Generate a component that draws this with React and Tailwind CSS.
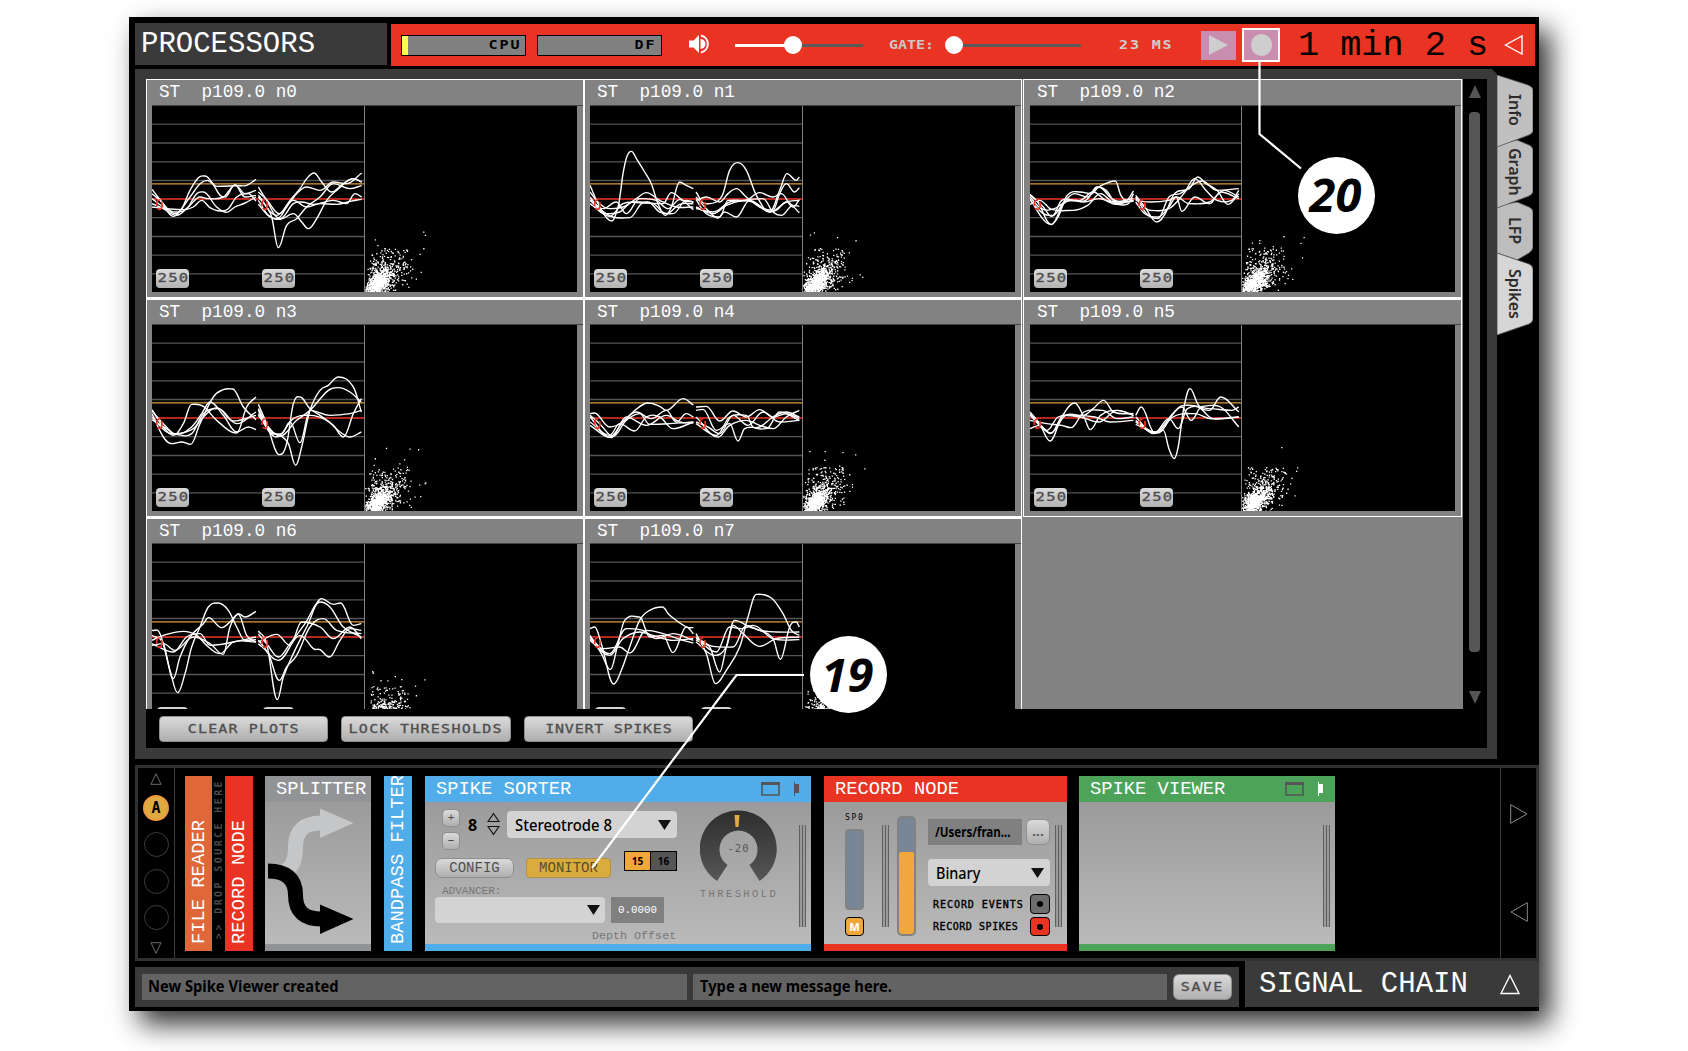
import React from 'react';

const MONO = "font-['Liberation_Mono',monospace]";
const PIXEL = "font-['DejaVu_Sans_Mono',monospace]";
const SANS = "font-['Noto_Sans','Open_Sans',sans-serif]";

// Spike traces. Each cell holds curves for two channels, in the coordinate frame given by `frame`.
const CELLS = [
  {
    name: 'n0', frame: '96 317 636 558',
    curves: `96,567 120,598 160,648 185,625 210,570 235,532 255,527 275,545 300,585 315,590 345,553 375,580 408,570
96,580 120,600 165,640 210,590 240,550 262,540 290,558 350,556 380,555 408,537
96,595 130,620 165,635 200,625 230,580 250,575 290,620 320,636 345,620 375,608 408,590
96,610 130,625 170,645 205,620 240,590 265,595 310,590 345,555 375,590 408,585
96,620 140,625 190,628 220,620 245,600 270,622 300,632 325,625 350,590 385,580 408,602
415,560 440,600 475,652 500,620 530,580 560,560 600,570 640,545 680,550 725,518
415,575 440,598 478,640 510,600 540,565 560,535 582,518 605,545 635,575 670,550 700,535 725,545
415,590 440,620 455,650 475,742 500,675 530,655 560,620 600,590 640,550 690,565 725,556
415,600 445,645 480,657 520,640 545,665 565,685 590,655 620,600 650,570 700,535 725,545
415,612 450,650 480,655 520,610 545,605 580,612 640,600 680,610 705,580 725,590
415,585 470,645 520,600 560,620 600,610 650,612 690,603 725,597`,
  },
  {
    name: 'n1', frame: '31 317 636 558',
    curves: `31,555 60,620 97,662 115,620 122,580 130,520 142,468 155,453 172,478 195,515 215,550 235,610 257,645 275,620 300,545 320,555 341,565
31,575 60,610 90,625 130,620 170,595 200,577 240,600 290,620 341,620
31,590 60,625 100,650 150,652 185,610 205,605 240,635 280,640 320,600 341,605
31,598 70,625 110,605 140,640 180,595 230,600 265,625 300,598 341,628
31,600 80,640 120,635 160,605 220,610 260,640 300,612 341,610
31,610 90,648 130,610 190,608 250,610 275,577 310,600 341,605
349,575 375,610 410,605 430,580 450,510 475,487 500,510 530,585 570,635 600,570 622,520 650,540 659,530
349,600 380,590 420,605 445,580 470,565 500,590 540,620 580,630 600,580 620,550 645,575 659,562
349,590 380,625 415,653 435,635 470,650 510,600 560,630 590,630 620,605 659,637
349,625 400,635 450,605 500,600 540,577 580,590 605,580 640,620 659,598
349,598 380,640 420,650 445,600 520,605 570,635 620,605 659,600
349,620 400,640 440,615 490,600 550,595 580,635 605,645 640,615 659,618`,
  },
  {
    name: 'n2', frame: '54 317 571 558',
    curves: `54,585 75,605 111,672 130,650 155,585 190,575 220,580 240,560 285,542 300,585 315,600 334,572
54,582 90,620 112,648 150,600 175,580 210,590 235,560 260,570 290,610 334,600
54,590 85,625 120,625 160,600 200,605 240,595 290,612 320,610 334,580
54,600 90,640 115,645 140,600 190,600 225,575 260,600 300,605 334,600
54,612 80,600 112,627 170,630 210,615 245,580 280,605 334,595
54,595 88,655 112,673 145,610 175,600 205,600 240,560 275,595 300,605 334,603
340,585 365,620 397,665 420,640 445,580 485,565 508,530 530,550 560,570 590,612 619,580
340,590 370,640 400,655 430,590 460,580 520,542 560,570 619,565
340,600 380,605 430,600 450,590 485,610 540,605 580,570 619,590
340,605 365,640 400,650 430,620 450,590 465,633 500,590 540,610 570,575 619,595
340,595 380,630 430,625 470,580 500,535 530,570 560,600 600,600 619,570`,
  },
  {
    name: 'n3', frame: '96 74 636 558',
    curves: `96,328 130,380 160,405 190,370 215,312 250,318 290,360 350,398 380,320 408,290
96,340 130,410 155,430 185,425 212,432 240,370 280,290 310,268 338,266 370,320 408,358
96,332 130,370 170,402 215,380 245,340 270,305 310,345 350,395 385,380 408,388
96,350 140,395 170,400 220,385 250,350 290,322 340,362 408,345
96,358 140,385 165,402 215,400 250,340 295,325 350,370 408,335
415,312 440,370 478,463 500,430 520,310 540,290 570,325 600,345 640,375 670,410 700,340 724,295
415,325 450,390 480,405 505,430 527,495 545,440 570,330 600,270 625,255 655,230 700,260 724,335
415,340 445,380 480,408 530,360 570,330 625,270 655,262 690,275 724,305
415,330 450,395 485,400 510,365 540,427 570,330 630,345 690,340 724,330
415,345 470,410 520,355 570,345 620,360 660,395 690,410 724,395`,
  },
  {
    name: 'n4', frame: '91 74 636 558',
    curves: `91,340 110,340 150,380 190,365 220,335 265,308 300,318 320,330 370,295 401,314
91,350 150,410 190,365 230,335 275,355 320,330 350,365 380,340 401,350
91,365 150,405 180,370 225,392 260,350 300,350 340,385 401,365
91,375 155,412 200,350 260,375 320,345 360,365 401,368
91,345 120,370 160,408 200,360 240,340 270,372 330,370 401,365
409,320 440,318 480,362 520,332 560,350 600,328 640,350 680,340 719,355
409,330 430,327 470,390 510,370 535,422 555,385 600,380 640,350 680,335 719,350
409,350 475,410 510,375 560,360 600,375 640,385 680,350 719,330
409,365 445,380 480,400 520,345 565,375 610,335 660,365 719,360
409,370 470,405 510,350 560,345 580,380 620,385 660,335 719,360`,
  },
  {
    name: 'n5', frame: '54 74 571 558',
    curves: `54,335 80,370 108,422 140,350 175,308 200,350 217,388 245,345 290,330 334,345
54,345 90,385 110,398 150,345 200,345 225,325 253,300 280,335 334,340
54,360 100,370 140,375 165,382 200,335 250,330 290,355 334,350
54,385 80,375 110,400 145,345 190,350 240,365 290,330 334,345
54,340 100,390 130,350 180,345 230,350 270,365 334,360
340,345 355,320 390,395 415,390 430,445 444,475 455,440 470,325 487,265 510,315 540,330 570,290 619,335
340,360 390,398 430,355 455,385 480,325 540,325 600,330 619,320
340,372 395,395 440,340 465,320 490,360 520,318 570,320 619,380
340,350 390,400 420,370 470,315 510,320 550,355 619,350
340,365 400,398 440,350 500,340 540,355 580,355 619,350`,
  },
  {
    name: 'n6', frame: '96 101 636 558',
    curves: `96,360 120,370 150,480 173,547 195,490 215,410 240,350 265,290 295,278 325,300 350,350 375,390 408,388
96,375 130,400 160,505 180,440 210,380 250,340 265,322 305,352 335,330 355,310 375,320 408,303
96,390 130,375 190,363 230,375 265,410 300,430 340,395 408,395
96,400 160,425 200,380 240,370 270,405 340,395 408,380
96,405 130,400 165,420 220,380 270,400 310,432 330,350 355,312 380,375 408,395
415,362 440,400 472,568 490,500 520,430 560,350 605,265 640,282 662,278 700,345 724,340
415,372 440,400 475,440 510,400 555,340 600,275 630,290 670,350 724,380
415,395 470,372 510,405 545,335 600,350 640,385 690,350 724,385
415,400 445,430 478,510 500,470 530,435 570,350 610,325 650,360 724,370
415,390 475,450 530,380 550,380 580,415 600,418 628,440 660,390 690,355 724,360`,
  },
  {
    name: 'n7', frame: '91 101 636 558',
    curves: `91,355 105,350 125,400 162,521 185,480 210,410 240,330 270,300 308,290 330,315 380,350 401,352
91,375 125,430 152,478 175,400 195,330 240,320 270,380 310,375 340,427 380,350 401,370
91,380 150,430 200,355 250,360 290,385 340,370 401,390
91,390 150,435 190,385 240,365 280,375 340,390 401,385
91,385 130,415 180,410 210,428 260,360 310,370 370,390 401,398
409,370 440,430 468,520 500,480 540,410 565,320 590,252 635,263 670,310 695,360 719,375
409,385 450,410 480,485 500,410 525,330 570,350 600,360 640,385 662,447 690,350 710,335 719,350
409,395 465,435 500,410 520,345 550,370 600,408 650,385 719,380
409,380 470,425 510,350 545,355 580,345 640,385 719,388
409,390 460,408 520,410 560,345 600,360 650,365 719,365`,
  },
];

// Catmull-Rom spline through the listed points.
function smooth(line) {
  const p = line.trim().split(' ').map((s) => s.split(',').map(Number));
  let d = `M${p[0][0]} ${p[0][1]}`;
  for (let i = 0; i < p.length - 1; i++) {
    const a = p[i - 1] || p[i];
    const b = p[i];
    const c = p[i + 1];
    const e = p[i + 2] || c;
    const cx1 = b[0] + (c[0] - b[0]) * 0.38;
    const cx2 = c[0] - (c[0] - b[0]) * 0.38;
    // A local extremum gets a flat tangent so that the curve peaks at the listed point.
    const m1 = (b[1] - a[1]) * (c[1] - b[1]) < 0 ? 0 : (c[1] - a[1]) / (c[0] - a[0] || 1);
    const m2 = (c[1] - b[1]) * (e[1] - c[1]) < 0 ? 0 : (e[1] - b[1]) / (e[0] - b[0] || 1);
    d += `C${cx1.toFixed(1)} ${(b[1] + m1 * (cx1 - b[0])).toFixed(1)} ${cx2.toFixed(1)} ${(c[1] - m2 * (c[0] - cx2)).toFixed(1)} ${c[0]} ${c[1]}`;
  }
  return d;
}

function scatter(seed) {
  let s = seed * 7919 + 13;
  const r = () => {
    s = (s * 16807) % 2147483647;
    return s / 2147483647;
  };
  for (let i = 0; i < 8; i++) r();
  const g = () => Math.sqrt(-2 * Math.log(r() + 1e-9)) * Math.cos(6.2832 * r());
  let d = '';
  const put = (x, y) => {
    if (x > 0 && y > 0) d += `M${x.toFixed(1)} ${(186 - y).toFixed(1)}h1.3v1.3h-1.3z`;
  };
  for (let i = 0; i < 620; i++) {
    const t = g() * 5;
    put(12 + t + g() * 4, 9 + t + g() * 4.5);
  }
  for (let i = 0; i < 330; i++) {
    const t = g() * 6;
    put(17 + t + g() * 9, 14 + t + g() * 8);
  }
  for (let i = 0; i < 70; i++) put(4 + r() * 38, 22 + r() * 22);
  for (let i = 0; i < 16; i++) put(6 + r() * 56, 12 + r() * 52);
  return d;
}

const GRID = [54.5, 111, 167.5, 223.5, 335, 391.5, 447.5, 503.5];

function Badge() {
  return (
    <div className={`${PIXEL} flex h-[19px] w-[33px] items-center justify-center rounded-[4px] bg-gradient-to-b from-[#dcdcdc] to-[#b2b2b2] text-[12px] leading-[17px] text-[#4c4c4c]`}>
      <span className="-mt-px inline-block scale-x-130 pl-px tracking-[1px] [-webkit-text-stroke:0.3px_#4c4c4c]">250</span>
    </div>
  );
}

function Cell({ cell, index }) {
  const third = index % 3 === 2;
  const [ox, oy, w] = cell.frame.split(' ').map(Number);
  const k = w / 636;
  const lastRow = index > 5;
  return (
    <div className={`h-[219px] border border-white bg-[#828282] ${third ? 'ml-px pl-[6px] w-[439px]' : 'pl-[5px] w-[438px]'} ${index > 2 ? 'border-t-2' : ''}`}>
      <div className={`${MONO} whitespace-pre pl-[7px] pt-px text-[17.7px] leading-[25px] text-white ${index > 2 ? 'h-[25px] -mt-px mb-px' : 'h-[26px] -mt-px mb-px'}`}>
        {`ST  p109.0 ${cell.name}`}
      </div>
      <div className="-mt-px flex h-[187px] gap-px border-t border-[#444] bg-[#828282]">
        <div className={`relative h-[186px] overflow-hidden bg-black ${third ? 'w-[211px]' : 'w-[212px]'}`}>
          <svg className="h-full w-full" viewBox={cell.frame} preserveAspectRatio="none" fill="none">
            {GRID.map((y) => (
              <path key={y} d={`M${ox} ${oy + y}h${w}`} stroke="#555" strokeWidth="4" />
            ))}
            <path d={`M${ox} ${oy + 233.5}h${w}`} stroke="#e09a3a" strokeWidth="3.6" />
            <path d={`M${ox} ${oy + 279}h${w}`} stroke="#f03526" strokeWidth="4.4" />
            {cell.curves.split('\n').map((c, i) => (
              <path key={i} d={smooth(c)} stroke="#fff" strokeWidth="1.4" vectorEffect="non-scaling-stroke" />
            ))}
            {[22, 338].map((x) => (
              <ellipse key={x} cx={ox + x * k} cy={oy + 296} rx="8" ry="14" stroke="#e93323" strokeWidth="5" strokeDasharray="24 6" />
            ))}
          </svg>
          {lastRow ? (
            <div className="absolute left-[5px] top-[163px] flex gap-[75px]">
              <div className="h-[10px] w-[31px] rounded-t-[4px] bg-[#d4d4d4]" />
              <div className="h-[10px] w-[31px] rounded-t-[4px] bg-[#d4d4d4]" />
            </div>
          ) : (
            <div className="absolute bottom-[4px] left-[4px] flex gap-[73px]">
              <Badge />
              <Badge />
            </div>
          )}
        </div>
        <svg className={`h-[186px] bg-black ${third ? 'w-[213px]' : 'w-[212px]'}`}>
          <path d={scatter(index + 3)} fill="#fff" />
        </svg>
      </div>
    </div>
  );
}

function Slider({ value, width, full }) {
  return (
    <div className={`relative flex h-[18px] items-center ${width}`}>
      <div className="h-[3px] bg-white" style={{ width: full ? 0 : value }} />
      <div className="h-[3px] flex-1 bg-[#5a5a5a]" />
      <div className="absolute top-0 h-[18px] w-[18px] rounded-full bg-white" style={{ left: value - 9 }} />
    </div>
  );
}

function Tab({ label, h, d, fill, className }) {
  return (
    <div className={`relative w-[36px] ${className}`}>
      <svg className="absolute inset-0 h-full w-full" viewBox={`0 0 36 ${h}`}>
        <path d={d} fill={fill} stroke="#555" strokeWidth="0.8" />
      </svg>
      <div className={`${SANS} relative flex h-full w-full items-center justify-center text-[16px] font-semibold text-[#2c2c2c] [writing-mode:vertical-rl]`}>
        {label}
      </div>
    </div>
  );
}

function GreyButton({ children, className }) {
  return (
    <div className={`flex items-center justify-center border border-[#8f8f8f] bg-gradient-to-b from-[#dadada] to-[#afafaf] text-[#4f4f4f] ${className}`}>
      {children}
    </div>
  );
}

function Wide({ children, className = '' }) {
  return <span className={`${PIXEL} inline-block scale-x-125 whitespace-pre ${className}`}>{children}</span>;
}

function Grip() {
  return (
    <div className="flex h-[102px] w-[7px] shrink-0 justify-between bg-[#999]">
      <div className="w-px bg-[#5f5f5f]" />
      <div className="w-px bg-[#5f5f5f]" />
      <div className="w-px bg-[#5f5f5f]" />
    </div>
  );
}

function Caret() {
  return (
    <svg width="13" height="10" viewBox="0 0 13 10">
      <path d="M0 0h13L6.5 10z" fill="#111" />
    </svg>
  );
}

function Strip({ label, className }) {
  return (
    <div className={`${MONO} flex h-[175px] shrink-0 items-center justify-start overflow-hidden whitespace-pre text-white [writing-mode:vertical-rl] rotate-180 text-[18.8px] pr-px pt-[7px] ${className}`}>
      {label}
    </div>
  );
}

function Module({ title, color, className, icons, children }) {
  return (
    <div className={`flex h-[175px] shrink-0 flex-col ${className}`}>
      <div className={`flex h-[26px] items-center ${color}`}>
        <div className={`${MONO} w-0 flex-1 whitespace-pre pl-[11px] pt-px text-[18.8px] leading-[25px] text-white`}>{title}</div>
        {icons}
      </div>
      <div className="h-[142px] bg-gradient-to-b from-[#9b9b9b] to-[#bababa]">{children}</div>
      <div className={`h-[7px] ${color}`} />
    </div>
  );
}

function ModuleIcons({ flag, className }) {
  return (
    <svg className={className} width="39" height="14" viewBox="0 0 39 14">
      <path d="M1 1h17v12H1z" fill="none" stroke="#555" strokeWidth="1.6" />
      <path d="M0 0h19v3H0z" fill="#555" />
      <path d="M33 0h1v2h4v9h-4v3h-1z" fill={flag} />
    </svg>
  );
}

export default function App() {
  return (
    <div className="h-[1051px] w-[1688px] overflow-hidden bg-white pl-[129px] pt-[17px]">
      <div className="relative flex h-[994px] w-[1410px] flex-col bg-black pl-[6px] pt-[6px] shadow-[11px_13px_26px_rgba(0,0,0,0.82)]">
        {/* Top bar */}
        <div className="flex h-[46px] gap-[4px]">
          <div className={`${MONO} h-[42px] w-[252px] bg-[#3a3a3a] pl-[6px] pt-px text-[29px] leading-[41px] text-white`}>PROCESSORS</div>
          <div className="mt-px flex h-[42px] w-[1144px] items-center bg-[#e93323]">
            <div className="ml-[10px] flex h-[21px] w-[125px] items-center border border-black bg-[#808080]">
              <div className="h-full w-[6px] bg-[#ffff54]" />
              <div className="flex-1 pr-[4px] text-right text-[12px] font-bold text-black"><Wide className="origin-right tracking-[1.6px]">CPU</Wide></div>
            </div>
            <div className="ml-[11px] flex h-[21px] w-[125px] items-center border border-black bg-[#808080]">
              <div className="flex-1 pr-[4px] text-right text-[12px] font-bold text-black"><Wide className="origin-right tracking-[1.6px]">DF</Wide></div>
            </div>
            <svg className="-mt-[3px] ml-[27px]" width="20" height="20" viewBox="0 0 20 20">
              <path d="M0 6.5h4.5L10 1v18l-5.5-5.500H0z" fill="#fff" />
              <path d="M11.500 5a5 5 0 0 1 0 10z" fill="#fff" />
              <path d="M12 1.500a8.700 8.700 0 0 1 0 17" fill="none" stroke="#fff" strokeWidth="2" />
            </svg>
            <div className="ml-[26px]"><Slider value={58} width="w-[128px]" /></div>
            <div className="ml-[26px] w-[64px] text-[12px] font-bold text-[#c9c9c9]"><Wide className="origin-left">GATE:</Wide></div>
            <div><Slider value={1} width="w-[128px]" full /></div>
            <div className="ml-[38px] w-[82px] text-[12px] font-bold text-[#cfcfcf]"><Wide className="origin-left tracking-[1.5px]">23 MS</Wide></div>
            <div className="flex h-[29px] w-[35px] items-center bg-[#c98db0] pl-[8px]">
              <svg width="19" height="20" viewBox="0 0 19 20"><path d="M0 0l19 10L0 20z" fill="#cecece" /></svg>
            </div>
            <div className="ml-[6px] flex h-[34px] w-[38px] items-center justify-center border-2 border-white bg-[#c98db0]">
              <div className="h-[22px] w-[21px] rounded-full bg-[#cecece]" />
            </div>
            <div className={`${MONO} ml-[18px] w-[206px] whitespace-pre pt-[2px] text-[35.200px] leading-[40px] text-black`}>1 min 2 s</div>
            <svg width="19" height="20" viewBox="0 0 19 20"><path d="M1.500 10L18 1v18z" fill="none" stroke="#fff" strokeWidth="1.400" /></svg>
          </div>
        </div>

        {/* Plots pane and tabs */}
        <div className="flex h-[696px]">
          <div className="h-[690px] w-[1362px] bg-[#3a3a3a] pl-[11px] pt-[10px] [clip-path:polygon(0_0,1357px_0,1362px_5px,1362px_690px,0_690px)]">
            <div className="h-[669px] w-[1341px] bg-black">
              <div className="flex h-[630px]">
                <div className="grid w-[1317px] grid-cols-[438px_438px_440px] content-start overflow-hidden bg-[#828282]">
                  {CELLS.map((c, i) => (
                    <Cell key={c.name} cell={c} index={i} />
                  ))}
                </div>
                <div className="flex flex-1 flex-col items-center pr-px pt-[6px]">
                  <svg width="12" height="13" viewBox="0 0 12 13"><path d="M6 0l6 13H0z" fill="#555" /></svg>
                  <div className="mt-[14px] h-[540px] w-[11px] rounded-[4px] bg-[#565656]" />
                  <svg className="mt-[39px]" width="12" height="13" viewBox="0 0 12 13"><path d="M0 0h12L6 13z" fill="#555" /></svg>
                </div>
              </div>
              <div className="flex gap-[13px] pl-[13px] pt-[7px] text-[12px]">
                <GreyButton className="h-[26px] w-[169px] rounded-[4px] pb-px"><Wide className="tracking-[0.900px] [-webkit-text-stroke:0.3px_#4f4f4f]">CLEAR PLOTS</Wide></GreyButton>
                <GreyButton className="h-[26px] w-[170px] rounded-[4px] pb-px"><Wide className="tracking-[1px] [-webkit-text-stroke:0.3px_#4f4f4f]">LOCK THRESHOLDS</Wide></GreyButton>
                <GreyButton className="h-[26px] w-[169px] rounded-[4px] pb-px"><Wide className="tracking-[0.600px] [-webkit-text-stroke:0.3px_#4f4f4f]">INVERT SPIKES</Wide></GreyButton>
              </div>
            </div>
          </div>
          <div className="flex w-[36px] flex-col pt-[6px]">
            <Tab label="Info" h={72} d="M0 0L31 10Q36 12 36 15V56Q36 58 32 60L0 72z" fill="#c0c0c0" className="z-30 h-[72px] pb-[2px]" />
            <Tab label="Graph" h={68} d="M0 5L20 0L32 5Q36 7 36 10V51Q36 54 32 56L0 68z" fill="#bdbdbd" className="z-20 -mt-[7px] h-[68px] pb-[4px]" />
            <Tab label="LFP" h={58} d="M0 4L20 0L32 5Q36 7 36 10V45Q36 48 32 51L20 58L0 51z" fill="#bdbdbd" className="z-10 -mt-[6px] h-[58px]" />
            <Tab label="Spikes" h={82} d="M0 0L32 11Q36 13 36 16V66Q36 69 32 71L0 82z" fill="#d6d6d6" className="z-30 -mt-[7px] h-[82px]" />
          </div>
        </div>

        {/* Signal chain */}
        <div className="flex h-[196px] w-[1404px] border-[3px] border-[#303030] bg-black">
          <div className="flex w-[37px] flex-col items-center border-r border-[#3c3c3c] pt-[5px]">
            <svg width="12" height="12" viewBox="0 0 12 12"><path d="M6 .7L11 11.300H1z" fill="none" stroke="#777" strokeWidth="0.900" /></svg>
            <div className={`${PIXEL} mt-[10px] flex h-[26px] w-[26px] items-center justify-center rounded-full border-2 border-[#ec9a42] bg-[#e0ab3e] text-[15px] font-bold text-black`}>A</div>
            <div className="mt-[11px] h-[25px] w-[25px] rounded-full border border-[#3c3c3c]" />
            <div className="mt-[12px] h-[25px] w-[25px] rounded-full border border-[#3c3c3c]" />
            <div className="mt-[11px] h-[25px] w-[25px] rounded-full border border-[#3c3c3c]" />
            <svg className="mt-[12px]" width="12" height="12" viewBox="0 0 12 12"><path d="M1 .7h10L6 11.300z" fill="none" stroke="#777" strokeWidth="0.900" /></svg>
          </div>
          <div className="flex flex-1 pl-[10px] pt-[8px]">
            <Strip label="FILE READER" className="w-[27px] bg-[#df6739]" />
            <div className={`${PIXEL} ml-[2px] flex h-[175px] w-[8px] items-center overflow-hidden whitespace-pre pt-[12px] text-[10px] font-bold tracking-[2.400px] text-[#4a4a4a] [writing-mode:vertical-rl] rotate-180`}>{'>> DROP SOURCE HERE'}</div>
            <Strip label="RECORD NODE" className="ml-[3px] w-[28px] bg-[#e93323]" />
            <Module title="SPLITTER" color="bg-[#929397]" className="ml-[12px] w-[106px]">
              <svg width="106" height="142" viewBox="265 802 106 142" fill="none">
                <path d="M281 873C292 869 295.500 861 295.500 847C295.500 830 305 823 321 823" stroke="#c5c6c8" strokeWidth="15" />
                <path d="M320 808.600L353.500 823L320 838z" fill="#c5c6c8" />
                <path d="M268 871C286 871 295.500 879 295.500 895C295.500 912 305 919 321 919" stroke="#000" strokeWidth="15" />
                <path d="M320 904.500L353.500 919L320 934z" fill="#000" />
              </svg>
            </Module>
            <Strip label="BANDPASS FILTER" className="ml-[13px] w-[28px] bg-[#50ade9]" />

            <Module title="SPIKE SORTER" color="bg-[#50ade9]" className="ml-[13px] w-[386px]" icons={<ModuleIcons flag="#555" className="mr-[11px]" />}>
              <div className="flex h-full pl-[10px] pt-[7px]">
                <div className="w-[242px]">
                  <div className="flex h-[42px]">
                    <div className="ml-[7px] flex flex-col gap-[5px]">
                      <GreyButton className="h-[18px] w-[18px] rounded-[5px] font-['DejaVu_Sans_Mono'] text-[11px]">+</GreyButton>
                      <GreyButton className="h-[18px] w-[18px] rounded-[5px] font-['DejaVu_Sans_Mono'] text-[11px]">−</GreyButton>
                    </div>
                    <div className={`${SANS} ml-[8px] mt-[5px] w-[19px] text-[16px] font-bold leading-[22px] text-black`}>8</div>
                    <svg className="mt-[3px]" width="13" height="24" viewBox="0 0 13 24" fill="none" stroke="#111" strokeWidth="1.200">
                      <path d="M6.500 1.500L12 9.500H1zM1 14.500h11L6.500 22.500z" />
                    </svg>
                    <div className="ml-[7px] mt-[2px] flex h-[27px] w-[170px] items-center justify-between rounded-[4px] bg-[#d3d3d3] pl-[8px] pr-[6px]">
                      <span className={`${SANS} w-[120px] origin-left scale-x-93 whitespace-nowrap text-[16px] font-medium text-black`}>Stereotrode 8</span>
                      <Caret />
                    </div>
                  </div>
                  <div className="flex h-[28px]">
                    <GreyButton className={`${MONO} mt-[7px] h-[20px] w-[79px] rounded-[7px] text-[14px]`}>CONFIG</GreyButton>
                    <div className={`${MONO} ml-[12px] mt-[7px] flex h-[20px] w-[85px] items-center justify-center rounded-[4px] border border-[#b0904c] bg-[#d9ac3d] text-[14px] text-[#5a4c26]`}>MONITOR</div>
                    <div className={`${SANS} ml-[13px] flex h-[20px] w-[53px] border border-black bg-black text-[10px] font-bold leading-[18px] text-black`}>
                      <div className="w-[25px] bg-[#f0a83c] text-center">15</div>
                      <div className="ml-px flex-1 bg-[#555] text-center">16</div>
                    </div>
                  </div>
                  <div className={`${MONO} h-[18px] pl-[7px] pt-[7px] text-[11px] leading-[11px] text-[#777]`}>ADVANCER:</div>
                  <div className="flex gap-[6px]">
                    <div className="flex h-[26px] w-[170px] items-center justify-end rounded-[4px] bg-[#d3d3d3] pr-[5px]"><Caret /></div>
                    <div className={`${MONO} h-[26px] w-[53px] bg-[#808080] text-center text-[10.800px] leading-[26px] text-white`}>0.0000</div>
                  </div>
                  <div className={`${MONO} mt-[7px] whitespace-pre pl-[157px] text-[11.700px] leading-[13px] text-[#777]`}>Depth Offset</div>
                </div>
                <div className="ml-[23px] flex w-[78px] flex-col items-center pt-px">
                  <svg width="78" height="74" viewBox="700 809 78 74">
                    <defs>
                      <linearGradient id="knob" x1="0" y1="0" x2="0" y2="1">
                        <stop offset="0" stopColor="#2e2e2e" />
                        <stop offset="1" stopColor="#565656" />
                      </linearGradient>
                    </defs>
                    <path d="M717 880A38.500 38.500 0 1 1 759.500 880L749.500 864A19 19 0 1 0 727.500 864z" fill="url(#knob)" />
                    <path d="M734.500 814h5l-1 12h-3z" fill="#e0ab3e" />
                    <text x="738.5" y="851" textAnchor="middle" fontSize="10.500" letterSpacing="1" fill="#555" className="font-['DejaVu_Sans_Mono']">-20</text>
                  </svg>
                  <div className={`${MONO} mt-[4px] text-[10.500px] leading-[12px] tracking-[2.400px] text-[#777]`}>THRESHOLD</div>
                </div>
                <div className="ml-[21px] pt-[16px]"><Grip /></div>
              </div>
            </Module>

            <Module title="RECORD NODE" color="bg-[#e93323]" className="ml-[13px] w-[243px]">
              <div className="flex h-full">
                <div className="ml-[20px] w-[20px] pt-[12px]">
                  <div className={`${PIXEL} h-[15px] whitespace-nowrap pl-px text-[8px] leading-[8px] tracking-[1.700px] text-black`}>SP0</div>
                  <div className="ml-px h-[81px] w-[19px] rounded-[4px] border-2 border-[#828282] bg-[#798696]" />
                  <div className={`${SANS} ml-px mt-[7px] h-[19px] w-[19px] rounded-[4px] border border-black bg-[#f0a83c] text-center text-[11px] font-extrabold leading-[17px] text-white`}>M</div>
                </div>
                <div className="ml-[18px] pt-[23px]"><Grip /></div>
                <div className="ml-[8px] mt-[14px] flex h-[120px] w-[19px] flex-col justify-end overflow-hidden rounded-[5px] border-2 border-[#828282] bg-[#798696]">
                  <div className="h-[82px] rounded-[2px] bg-[#f0a83c]" />
                </div>
                <div className="ml-[12px] w-[122px] pt-[17px]">
                  <div className="flex justify-between">
                    <div className={`${SANS} h-[26px] w-[94px] bg-[#808080] pl-[7px] text-[15px] font-bold leading-[25px] text-black`}><span className="inline-block origin-left scale-x-77">/Users/fran...</span></div>
                    <GreyButton className="h-[26px] w-[24px] rounded-[6px] font-['DejaVu_Sans'] text-[10px] font-bold">...</GreyButton>
                  </div>
                  <div className="mt-[14px] flex h-[27px] w-[122px] items-center justify-between rounded-[4px] bg-[#d3d3d3] pl-[8px] pr-[6px]">
                    <span className={`${SANS} origin-left scale-x-90 text-[16px] font-medium text-black`}>Binary</span>
                    <Caret />
                  </div>
                  <div className="mt-[8px] flex items-center justify-between pl-[5px]">
                    <span className={`${PIXEL} whitespace-pre text-[10px] tracking-[0.950px] text-black [-webkit-text-stroke:0.4px_#000]`}>RECORD EVENTS</span>
                    <div className="flex h-[20px] w-[20px] shrink-0 items-center justify-center rounded-[4px] border border-black bg-[#6e6e6e]"><div className="h-[6px] w-[6px] rounded-full bg-black" /></div>
                  </div>
                  <div className="mt-[3px] flex items-center justify-between pl-[5px]">
                    <span className={`${PIXEL} whitespace-pre text-[10px] tracking-[0.550px] text-black [-webkit-text-stroke:0.4px_#000]`}>RECORD SPIKES</span>
                    <div className="flex h-[19px] w-[20px] shrink-0 items-center justify-center rounded-[4px] border border-black bg-[#e93323]"><div className="h-[6px] w-[6px] rounded-full bg-black" /></div>
                  </div>
                </div>
                <div className="ml-[5px] pt-[23px]"><Grip /></div>
              </div>
            </Module>

            <Module title="SPIKE VIEWER" color="bg-[#4ea35b]" className="ml-[12px] w-[256px]" icons={<ModuleIcons flag="#fff" className="mr-[11px]" />}>
              <div className="flex justify-end pr-[5px] pt-[23px]"><Grip /></div>
            </Module>
          </div>
          <div className="flex w-[36px] flex-col items-center border-l border-[#3c3c3c] pt-[36px]">
            <svg width="18" height="20" viewBox="0 0 18 20"><path d="M.7.700L17 10L.7 19.300z" fill="none" stroke="#999" strokeWidth="0.900" /></svg>
            <svg className="mt-[78px]" width="18" height="20" viewBox="0 0 18 20"><path d="M17.300.700L1 10L17.300 19.300z" fill="none" stroke="#999" strokeWidth="0.900" /></svg>
          </div>
        </div>

        {/* Status bar */}
        <div className="flex h-[46px]">
          <div className={`${SANS} mt-[6px] flex h-[40px] w-[1104px] bg-[#3a3a3a] pl-[7px] pt-[7px] text-[16px] font-bold leading-[25px] text-black`}>
            <div className="h-[26px] w-[545px] bg-[#636363] pl-[6px]"><span className="inline-block origin-left scale-x-92">New Spike Viewer created</span></div>
            <div className="ml-[6px] h-[26px] w-[474px] bg-[#636363] pl-[7px]"><span className="inline-block origin-left scale-x-92">Type a new message here.</span></div>
            <GreyButton className="ml-[6px] h-[26px] w-[59px] rounded-[6px] text-[12px] font-normal"><Wide className="tracking-[1.500px] [-webkit-text-stroke:0.3px_#4f4f4f]">SAVE</Wide></GreyButton>
          </div>
          <div className="ml-[6px] flex h-[46px] w-[294px] bg-[#3a3a3a] pl-[14px]">
            <div className={`${MONO} w-[241px] whitespace-pre pt-px text-[29px] leading-[45px] text-white`}>SIGNAL CHAIN</div>
            <svg className="mt-[13px]" width="20" height="21" viewBox="0 0 20 21"><path d="M10 1.500L19 19.500H1z" fill="none" stroke="#fff" strokeWidth="1.400" /></svg>
          </div>
        </div>

        {/* Numbered callouts over the window */}
        <svg className="pointer-events-none absolute inset-0 z-40 h-[994px] w-[1410px]" viewBox="129 17 1410 994" fill="none">
          <path d="M1259.500 62V134L1301 168.500M804 675H736.500L592 868" stroke="#fff" strokeWidth="2.200" />
        </svg>
        <div className={`${SANS} absolute left-[1169px] top-[140px] z-50 h-[77px] w-[77px] rounded-full bg-white pr-[2px] text-center text-[47px] font-bold italic leading-[75px] text-black`}>20</div>
        <div className={`${SANS} absolute left-[681px] top-[619px] z-50 h-[77px] w-[77px] rounded-full bg-white pr-[2px] text-center text-[47px] font-bold italic leading-[76px] text-black`}>19</div>
      </div>
    </div>
  );
}
